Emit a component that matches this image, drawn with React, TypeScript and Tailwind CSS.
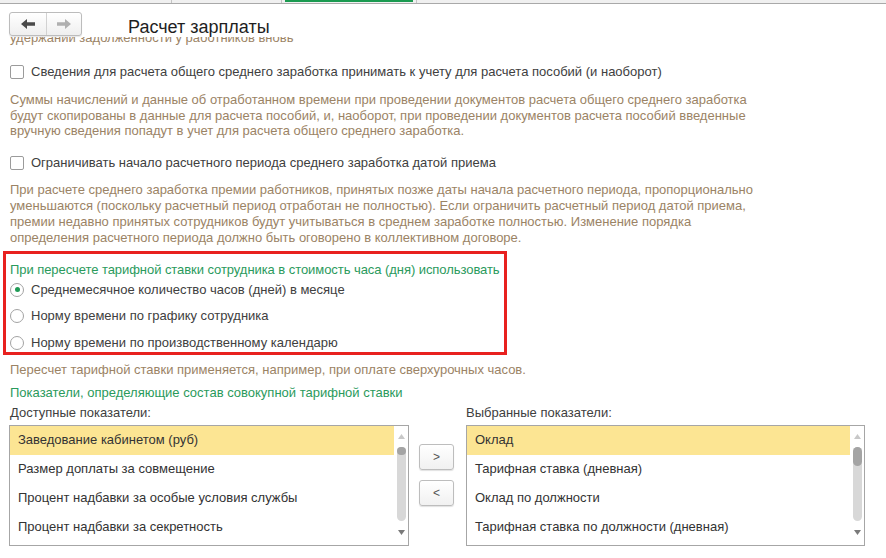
import React from 'react';

const available = [
  'Заведование кабинетом (руб)',
  'Размер доплаты за совмещение',
  'Процент надбавки за особые условия службы',
  'Процент надбавки за секретность',
];

const selected = [
  'Оклад',
  'Тарифная ставка (дневная)',
  'Оклад по должности',
  'Тарифная ставка по должности (дневная)',
];

function Checkbox({ label }: { label: string }) {
  return (
    <label className="flex h-4 items-center gap-[7px] pl-[10px]">
      <span className="h-[14px] w-[14px] shrink-0 rounded-[2px] border border-[#9b9b9b] bg-white" />
      <span className="whitespace-nowrap text-[#404040]">{label}</span>
    </label>
  );
}

function Radio({ label, checked }: { label: string; checked?: boolean }) {
  return (
    <div className="flex h-4 items-center gap-[7px] pl-[4px]">
      <span className="flex h-[14px] w-[14px] shrink-0 items-center justify-center rounded-full border border-[#a3a3a3] bg-white">
        {checked && <span className="h-[5px] w-[5px] rounded-full bg-[#1f9a55]" />}
      </span>
      <span className="whitespace-nowrap text-[#404040]">{label}</span>
    </div>
  );
}

function NavArrow({ dir, color }: { dir: 'left' | 'right'; color: string }) {
  return (
    <svg width="14" height="10" viewBox="0 0 14 10" className={dir === 'right' ? 'rotate-180' : ''}>
      <path d="M0 5 L6 0 L6 3.2 L14 3.2 L14 6.8 L6 6.8 L6 10 Z" fill={color} />
    </svg>
  );
}

function ScrollBar({ thumb }: { thumb: string }) {
  return (
    <div className="flex w-[14px] shrink-0 flex-col items-center bg-white">
      <svg width="7" height="5" viewBox="0 0 7 5" className="mt-[8px]">
        <path d="M3.5 0 L7 5 L0 5 Z" fill="#c8c8c8" />
      </svg>
      <div className="mt-[8px] flex h-[74px] w-[9px] flex-col rounded-full bg-[#d8d8d8]">
        <div className={`${thumb} w-[9px] rounded-full bg-[#a4a4a4]`} />
      </div>
      <svg width="7" height="5" viewBox="0 0 7 5" className="mt-[9px]">
        <path d="M0 0 L7 0 L3.5 5 Z" fill="#7a7a7a" />
      </svg>
    </div>
  );
}

function ListBox({ items, thumb }: { items: string[]; thumb: string }) {
  return (
    <div className="flex h-[121px] border border-[#a6a6a6] bg-white">
      <div className="flex-1">
        {items.map((item, i) => (
          <div
            key={item}
            className={`flex h-[29px] items-center pl-[8px] text-[#333] ${i === 0 ? 'bg-[#fce593]' : ''}`}
          >
            {item}
          </div>
        ))}
      </div>
      <ScrollBar thumb={thumb} />
    </div>
  );
}

function MoveButton({ label }: { label: string }) {
  return (
    <button
      type="button"
      className="flex h-[26px] w-[35px] items-center justify-center rounded-[3px] border border-[#bdbdbd] bg-gradient-to-b from-white to-[#f1f1f1] text-[12px] text-[#555] shadow-[0_1px_1px_rgba(0,0,0,0.12)]"
    >
      {label}
    </button>
  );
}

export default function App() {
  return (
    <div className="h-[558px] w-[886px] overflow-hidden bg-white font-['Liberation_Sans',Arial,sans-serif] text-[13px] leading-4">
      {/* tab strip */}
      <div className="flex h-[4px] border-b border-[#a9a9a9] bg-[#f0f0f0]">
        <div className="w-[172px] border-r border-[#c4c4c4]" />
        <div className="w-[110px] border-r border-[#c4c4c4]" />
        <div className="flex w-[135px] justify-center border-r border-[#c4c4c4]">
          <div className="h-[2px] w-[128px] bg-[#1a9a50]" />
        </div>
      </div>

      {/* form header */}
      <div className="flex h-[33px] items-start">
        <div className="ml-[9px] mt-[8px] flex h-[24px] w-[73px] rounded-[3px] border border-[#bcbcbc] bg-gradient-to-b from-white to-[#efefef] shadow-[0_1px_1px_rgba(0,0,0,0.1)]">
          <div className="flex w-[37px] items-center justify-center border-r border-[#d2d2d2]">
            <NavArrow dir="left" color="#4a4a4a" />
          </div>
          <div className="flex flex-1 items-center justify-center">
            <NavArrow dir="right" color="#b0b0b0" />
          </div>
        </div>
        <h1 className="ml-[46px] mt-[12px] text-[18px] leading-[22px] text-[#1e1e1e]">Расчет зарплаты</h1>
      </div>

      {/* scrolled settings area */}
      <div className="flex h-[521px] flex-col items-start overflow-hidden">
        <p className="mt-[-7px] whitespace-nowrap pl-[10px] text-[#9b8365]">
          удержании задолженности у работников вновь
        </p>

        <div className="mt-[18px]">
          <Checkbox label="Сведения для расчета общего среднего заработка принимать к учету для расчета пособий (и наоборот)" />
        </div>
        <p className="mt-[12px] whitespace-nowrap pl-[10px] leading-[15.5px] text-[#9b8365]">
          Суммы начислений и данные об отработанном времени при проведении документов расчета общего среднего заработка
          <br />
          будут скопированы в данные для расчета пособий, и, наоборот, при проведении документов расчета пособий введенные
          <br />
          вручную сведения попадут в учет для расчета общего среднего заработка.
        </p>

        <div className="mt-[16px]">
          <Checkbox label="Ограничивать начало расчетного периода среднего заработка датой приема" />
        </div>
        <p className="mt-[11px] whitespace-nowrap pl-[10px] text-[#9b8365]">
          При расчете среднего заработка премии работников, принятых позже даты начала расчетного периода, пропорционально
          <br />
          уменьшаются (поскольку расчетный период отработан не полностью). Если ограничить расчетный период датой приема,
          <br />
          премии недавно принятых сотрудников будут учитываться в среднем заработке полностью. Изменение порядка
          <br />
          определения расчетного периода должно быть оговорено в коллективном договоре.
        </p>

        {/* hourly rate conversion group */}
        <div className="ml-[3px] mt-[5px] w-[504px] border-[3px] border-[#e8211f] pb-[1px] pt-[8px]">
          <div className="whitespace-nowrap pl-[4px] tracking-[-0.06px] text-[#2a9a5c]">
            При пересчете тарифной ставки сотрудника в стоимость часа (дня) использовать
          </div>
          <div className="mt-[4px]">
            <Radio label="Среднемесячное количество часов (дней) в месяце" checked />
          </div>
          <div className="mt-[10.5px]">
            <Radio label="Норму времени по графику сотрудника" />
          </div>
          <div className="mt-[10.5px]">
            <Radio label="Норму времени по производственному календарю" />
          </div>
        </div>
        <p className="mt-[7px] pl-[10px] text-[#9b8365]">Пересчет тарифной ставки применяется, например, при оплате сверхурочных часов.</p>

        <div className="mt-[7px] pl-[10px] text-[#2a9a5c]">Показатели, определяющие состав совокупной тарифной ставки</div>

        {/* indicator pickers */}
        <div className="mt-[4px] flex pl-[9px]">
          <div className="w-[400px]">
            <div className="pl-[1px] text-[#404040]">Доступные показатели:</div>
            <div className="mt-[4px]">
              <ListBox items={available} thumb="h-[8px]" />
            </div>
          </div>
          <div className="ml-[10px] mt-[39px] flex flex-col gap-[10px]">
            <MoveButton label=">" />
            <MoveButton label="<" />
          </div>
          <div className="ml-[12px] w-[399px]">
            <div className="text-[#404040]">Выбранные показатели:</div>
            <div className="mt-[4px]">
              <ListBox items={selected} thumb="h-[19px]" />
            </div>
          </div>
        </div>
      </div>
    </div>
  );
}
